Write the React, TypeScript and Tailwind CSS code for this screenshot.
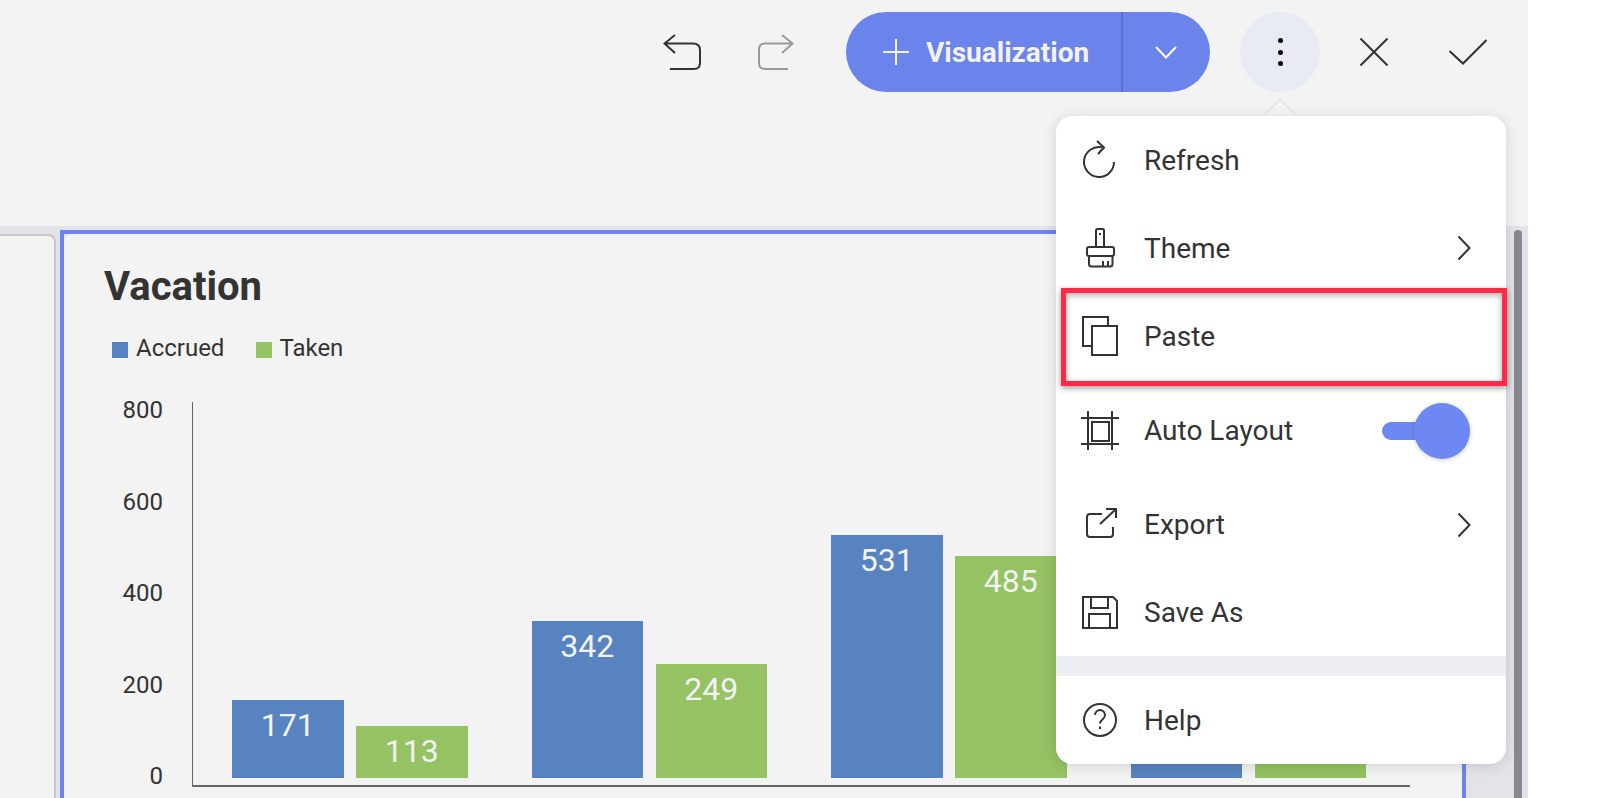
import React from "react";

const S = ({ w = 40, h = 40, children, className = "" }: { w?: number; h?: number; children: React.ReactNode; className?: string }) => (
  <svg width={w} height={h} viewBox={`0 0 ${w} ${h}`} fill="none" stroke="currentColor" strokeWidth={2} className={`shrink-0 ${className}`}>
    {children}
  </svg>
);

const Chevron = () => (
  <S w={14} h={26} className="-mr-px">
    <path d="M1.5 1.5 L12.5 13 L1.5 24.5" />
  </S>
);

const Row = ({ h, label, icon, right, raised }: { h: number; label: string; icon: React.ReactNode; right?: React.ReactNode; raised?: boolean }) => (
  <div style={{ height: h }} className="flex items-center pl-6 pr-9">
    <div className="w-10 h-10 mr-6">{icon}</div>
    <span className={`text-[28px] text-[#333] ${raised ? "pb-[1px]" : "pt-[2px]"}`}>{label}</span>
    {right && <div className="ml-auto flex items-center">{right}</div>}
  </div>
);

const Bar = ({ h, color, label }: { h: number; color: string; label?: string }) => (
  <div style={{ height: h }} className={`w-[111.5px] ${color} pt-[7px] text-center text-[32px] leading-9 text-[#f3f3f3]`}>
    {label}
  </div>
);

const groups = [
  { a: 78, b: 52, la: "171", lb: "113" },
  { a: 157, b: 114, la: "342", lb: "249" },
  { a: 243, b: 222, la: "531", lb: "485" },
  { a: 200, b: 190 },
];

export default function App() {
  return (
    <div className="flex h-[798px] w-[1600px] overflow-hidden bg-white font-[Roboto,sans-serif] text-[#333]">
      <div className="relative flex h-full w-[1528px] flex-col bg-[#f3f3f3]">
        {/* header */}
        <div className="h-[226px] shrink-0 pt-3 pr-[41px]">
          <div className="flex h-20 items-center justify-end">
            <S w={38} h={36} className="mr-[57px] text-[#333]">
              <path d="M12 1 L1.5 9.5 L12 19 M1.5 9.5 H30 Q37 9.5 37 16 V29 Q37 35 31 35 H7" />
            </S>
            <S w={36} h={36} className="mr-[52px] text-[#999]">
              <path d="M24 1 L34.5 9.5 L24 19 M34.5 9.5 H7 Q1 9.5 1 16 V29 Q1 35 7 35 H30" />
            </S>
            <div className="mr-[30px] flex h-20 w-[364px] items-center rounded-full bg-[#6b84ec] text-white">
              <div className="flex w-[275px] items-center pl-[37px]">
                <S w={26} h={26} className="mr-[17px] text-[#f3f3f3]">
                  <path d="M13 0 V26 M0 13 H26" />
                </S>
                <span className="pt-[2px] text-[28px] font-bold text-[#f3f3f3]">Visualization</span>
              </div>
              <div className="flex h-20 flex-1 items-center justify-center border-l-2 border-[#5a70cf] pr-[2px]">
                <S w={22} h={13}>
                  <path d="M1 1 L11 11.5 L21 1" />
                </S>
              </div>
            </div>
            <div className="mr-10 flex h-20 w-20 flex-col items-center justify-center gap-[6.5px] rounded-full bg-[#e8ebf4]">
              <div className="h-[5px] w-[5px] rounded-full bg-black" />
              <div className="h-[5px] w-[5px] rounded-full bg-black" />
              <div className="h-[5px] w-[5px] rounded-full bg-black" />
            </div>
            <S w={28} h={28} className="mr-[61px] text-[#333]">
              <path d="M0.5 0.5 L27.5 27.5 M27.5 0.5 L0.5 27.5" />
            </S>
            <S w={38} h={26} className="text-[#333]">
              <path d="M0.5 12 L14 24.5 L37.5 1" />
            </S>
          </div>
        </div>

        {/* dashboard area */}
        <div className="flex min-h-0 flex-1 overflow-hidden bg-[#e3e4ea]">
          <div className="mt-2 h-full w-[56px] shrink-0 rounded-tr-lg border-t-2 border-r-2 border-[#c8c8c8] bg-[#f3f3f3]" />
          <div className="mt-1 ml-1 h-[700px] w-[1406px] shrink-0 border-4 border-[#6d84ef] bg-[#e3e4ea]">
            <div className="h-full rounded-tl-lg bg-[#f3f3f3] pt-[31px] pl-10">
              <div className="text-[40px] leading-[44px] font-bold text-[#333]">Vacation</div>
              <div className="mt-[25px] flex h-7 items-center pl-2 text-[24px] text-[#333]">
                <div className="mt-[4px] mr-2 h-4 w-4 bg-[#5784c0]" />
                <span className="mr-8">Accrued</span>
                <div className="mt-[4px] mr-[7px] h-4 w-4 bg-[#95c263]" />
                <span>Taken</span>
              </div>
              <div className="mt-[34px] flex text-[24px] leading-7">
                <div className="flex h-[394px] w-[59px] flex-col justify-between text-right">
                  <span>800</span>
                  <span>600</span>
                  <span>400</span>
                  <span>200</span>
                  <span>0</span>
                </div>
                <div className="mt-[6px] ml-[29px] flex h-[385px] w-[1218px] items-end gap-[64px] border-b-2 border-l border-[#666] pb-[7px] pl-[39px]">
                  {groups.map((g, i) => (
                    <div key={i} className="flex items-end gap-[12.5px]">
                      <Bar h={g.a} color="bg-[#5784c0]" label={g.la} />
                      <Bar h={g.b} color="bg-[#95c263]" label={g.lb} />
                    </div>
                  ))}
                </div>
              </div>
            </div>
          </div>
          <div className="mt-1 mr-[6px] ml-auto h-full w-2 rounded-t-full bg-[#88898e]" />
        </div>

        {/* popover arrow */}
        <div className="absolute top-[103px] left-[1270px] z-10 h-5 w-5 rotate-45 border-t border-l border-[#dcdcdc] bg-[#f6f6f6]" />

        {/* menu */}
        <div className="absolute top-[116px] left-[1056px] z-20 h-[648px] w-[450px] rounded-2xl bg-white shadow-[0_2px_14px_rgba(0,0,0,0.14)]">
          <Row
            h={88}
            label="Refresh"
            icon={
              <S>
                <path d="M34 22 A15 15 0 1 1 22 7.3 M17 1 L24 7.5 L18 14" />
              </S>
            }
          />
          <Row
            h={88}
            label="Theme"
            right={<Chevron />}
            icon={
              <S>
                <path d="M16 19 V2.5 Q16 1 18 1 H22.5 Q24 1 24 2.5 V19 M9 19 H32 Q34 19 34 21 V26 Q34 28 32 28 H9 Q7 28 7 26 V21 Q7 19 9 19 Z M9 28 V36 Q9 38.5 11.5 38.5 H30 Q32.5 38.5 32.5 36 V28 M23 33 V38.5 M28 33 V38.5 M20 5 V7" />
              </S>
            }
          />
          <Row
            h={88}
            label="Paste"
            icon={
              <S>
                <path d="M12 30 H3 V1 H28 V10" />
                <rect x={12} y={10} width={25} height={29} />
              </S>
            }
          />
          <Row
            h={102}
            label="Auto Layout"
            raised
            right={
              <div className="relative h-14 w-[88px]">
                <div className="absolute top-[19px] left-0 h-[18px] w-[60px] rounded-full bg-[#6d88f3]" />
                <div className="absolute top-0 right-0 h-14 w-14 rounded-full bg-[#6d88f3] shadow-[0_1px_5px_rgba(0,0,0,0.2)]" />
              </div>
            }
            icon={
              <S>
                <path d="M8 0 V39 M32 0 V39 M1 7 H39 M1 33 H39" />
                <rect x={12} y={11} width={17} height={19} />
              </S>
            }
          />
          <Row
            h={86}
            label="Export"
            raised
            right={<Chevron />}
            icon={
              <S>
                <path d="M22 9 H10 Q7 9 7 12 V29 Q7 32 10 32 H30 Q33 32 33 29 V22 M20 19 L36 4 M26 4 H36 V13" />
              </S>
            }
          />
          <Row
            h={88}
            label="Save As"
            icon={
              <S>
                <path d="M3 5 H33 L37 9 V36 H3 Z M11 5 V16 H28 V5 M9 36 V22 H30 V36" />
              </S>
            }
          />
          <div className="h-5 bg-[#edeef3]" />
          <Row
            h={88}
            label="Help"
            icon={
              <S>
                <circle cx={20} cy={20} r={16} />
                <path d="M15 15 a5 5 0 1 1 8 4 c-2 1.5 -3 2.5 -3 4.5 M20 26.5 V29" />
              </S>
            }
          />
          {/* highlight box */}
          <div className="absolute top-[172px] left-[5px] h-[98px] w-[446px] border-[5px] border-[#ff2a45] shadow-[0_2px_6px_rgba(0,0,0,0.4),inset_0_2px_6px_rgba(0,0,0,0.35)]" />
        </div>
      </div>
    </div>
  );
}
